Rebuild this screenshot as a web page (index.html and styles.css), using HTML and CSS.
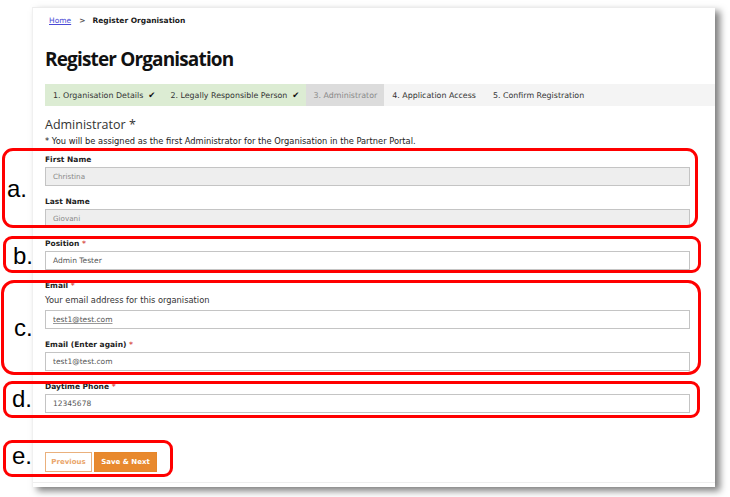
FILE: index.html
```html
<!DOCTYPE html>
<html lang="en">
<head>
<meta charset="utf-8">
<title>Register Organisation</title>
<link rel="stylesheet" href="styles.css">
</head>
<body>
<div class="stage">
  <div class="card">
    <div class="page">
      <nav class="crumbs"><a href="#">Home</a><span class="sep">&gt;</span><b>Register Organisation</b></nav>
      <h1 class="title">Register Organisation</h1>
      <ol class="steps">
        <li class="step done">1. Organisation Details <span class="tick">&#10004;</span></li>
        <li class="step done">2. Legally Responsible Person <span class="tick">&#10004;</span></li>
        <li class="step current">3. Administrator</li>
        <li class="step">4. Application Access</li>
        <li class="step">5. Confirm Registration</li>
      </ol>
      <div class="form">
        <h2 class="section">Administrator *</h2>
        <p class="note">* You will be assigned as the first Administrator for the Organisation in the Partner Portal.</p>
        <div class="field first">
          <div class="label">First Name</div>
          <div class="input disabled">Christina</div>
        </div>
        <div class="field">
          <div class="label">Last Name</div>
          <div class="input disabled">Giovani</div>
        </div>
        <div class="field">
          <div class="label">Position <span class="req">*</span></div>
          <div class="input">Admin Tester</div>
        </div>
        <div class="field email">
          <div class="label">Email <span class="req">*</span></div>
          <div class="help">Your email address for this organisation</div>
          <div class="input"><span class="spell">test1@test.com</span></div>
        </div>
        <div class="field">
          <div class="label">Email (Enter again) <span class="req">*</span></div>
          <div class="input">test1@test.com</div>
        </div>
        <div class="field">
          <div class="label">Daytime Phone <span class="req">*</span></div>
          <div class="input">12345678</div>
        </div>
        <div class="actions">
          <button class="btn prev" type="button">Previous</button>
          <button class="btn next" type="button">Save &amp; Next</button>
        </div>
      </div>
    </div>
  </div>

  <div class="mark mark-a"></div>
  <div class="mark mark-b"></div>
  <div class="mark mark-c"></div>
  <div class="mark mark-d"></div>
  <div class="mark mark-e"></div>

  <span class="tag tag-a">a.</span>
  <span class="tag tag-b">b.</span>
  <span class="tag tag-c">c.</span>
  <span class="tag tag-d">d.</span>
  <span class="tag tag-e">e.</span>
</div>
</body>
</html>
```

FILE: styles.css
```css
* { box-sizing: border-box; }
html, body { margin: 0; padding: 0; background: #fff; }
body { width: 730px; height: 497px; overflow: hidden; }

.stage {
  position: relative;
  width: 730px;
  height: 497px;
  padding: 7px 0 0 32px;
  font-family: "DejaVu Sans", Verdana, sans-serif;
  color: #222;
}

.card {
  width: 683px;
  height: 480px;
  background: #fff;
  border-top: 1px solid #ececec;
  border-left: 1px solid #f0f0f0;
  box-shadow: 5px 4px 7px rgba(0, 0, 0, 0.5);
}

.page {
  height: 475px;
  padding: 8px 0 0 12px;
  border-bottom: 1px solid #eeeeee;
}

.crumbs {
  font-size: 7.5px;
  line-height: 10px;
  padding-left: 4px;
  display: flex;
  align-items: center;
}
.crumbs a { color: #4b4bd6; text-decoration: underline; }
.crumbs .sep { margin: 0 7px 0 8px; color: #555; font-weight: bold; }
.crumbs b { color: #1a1a1a; }

.title {
  margin: 21px 0 0 0;
  font-family: "Open Sans", sans-serif;
  font-weight: 700;
  font-size: 19px;
  letter-spacing: -0.85px;
  line-height: 24px;
  color: #111;
}

.steps {
  list-style: none;
  margin: 13px 0 0 0;
  padding: 0;
  height: 22px;
  display: flex;
  background: #f4f4f4;
  font-size: 7.9px;
  color: #333;
}
.step {
  display: flex;
  align-items: center;
  padding: 0 8px;
  white-space: nowrap;
}
.step.done { background: #dcecd3; padding-right: 7px; }
.step.done + .step.done { padding-left: 8px; }
.step.current { background: #dcdcdc; color: #8a8a8a; padding: 0 7px; }
.step + .step:not(.done):not(.current) { padding-left: 8px; padding-right: 9px; }
.tick { margin-left: 5px; font-size: 8.5px; color: #111; }

.form { padding-right: 25px; }

.section {
  margin: 11px 0 0 0;
  font-family: "Open Sans", sans-serif;
  font-weight: 400;
  font-size: 12.5px;
  line-height: 16px;
  color: #333;
}

.note {
  margin: 3px 0 0 0;
  font-size: 8.3px;
  line-height: 10px;
  color: #222;
}

.field { margin-top: 11px; }
.field.first { margin-top: 9px; }
.field.email { margin-top: 11px; }

.label {
  font-size: 7.5px;
  font-weight: bold;
  line-height: 10px;
  color: #222;
}
.req { color: #d9534f; font-weight: bold; }

.help {
  margin-top: 4px;
  font-size: 8.3px;
  line-height: 10px;
  color: #333;
}
.help + .input { margin-top: 5px; }

.input {
  margin-top: 2px;
  height: 19px;
  border: 1.5px solid #c4c4c4;
  background: #fff;
  padding-left: 7px;
  display: flex;
  align-items: center;
  font-size: 7.5px;
  color: #555;
}
.input.disabled { background: #eeeeee; color: #888; font-size: 7.2px; }
.spell { text-decoration: underline; text-decoration-color: #999; }

.actions {
  margin-top: 39px;
  display: flex;
  gap: 2px;
}
.btn {
  height: 20px;
  padding: 0;
  font-family: "DejaVu Sans", Verdana, sans-serif;
  font-size: 7px;
  font-weight: bold;
  cursor: pointer;
}
.btn.prev {
  width: 47px;
  background: #fff;
  border: 1px solid #eab07c;
  color: #eaa56a;
}
.btn.next {
  width: 63px;
  background: #e8892e;
  border: 1px solid #e6862a;
  color: #fff;
}

.mark {
  position: absolute;
  border: 3px solid #ff0000;
  border-radius: 11px;
}
.mark-a { left: 2px; top: 148px; width: 696px; height: 80px; }
.mark-b { left: 3px; top: 236px; width: 698px; height: 37px; border-radius: 9px; }
.mark-c { left: 1px; top: 280px; width: 700px; height: 95px; border-radius: 13px; }
.mark-d { left: 3px; top: 381px; width: 697px; height: 37px; border-radius: 9px; }
.mark-e { left: 3px; top: 440px; width: 170px; height: 37px; border-radius: 9px; }

.tag {
  position: absolute;
  font-family: "Liberation Sans", Arial, sans-serif;
  font-size: 24px;
  line-height: 24px;
  color: #000;
}
.tag-a { left: 7px; top: 177px; }
.tag-b { left: 13px; top: 244px; }
.tag-c { left: 14px; top: 316px; }
.tag-d { left: 12px; top: 387px; }
.tag-e { left: 12px; top: 444px; }
```
